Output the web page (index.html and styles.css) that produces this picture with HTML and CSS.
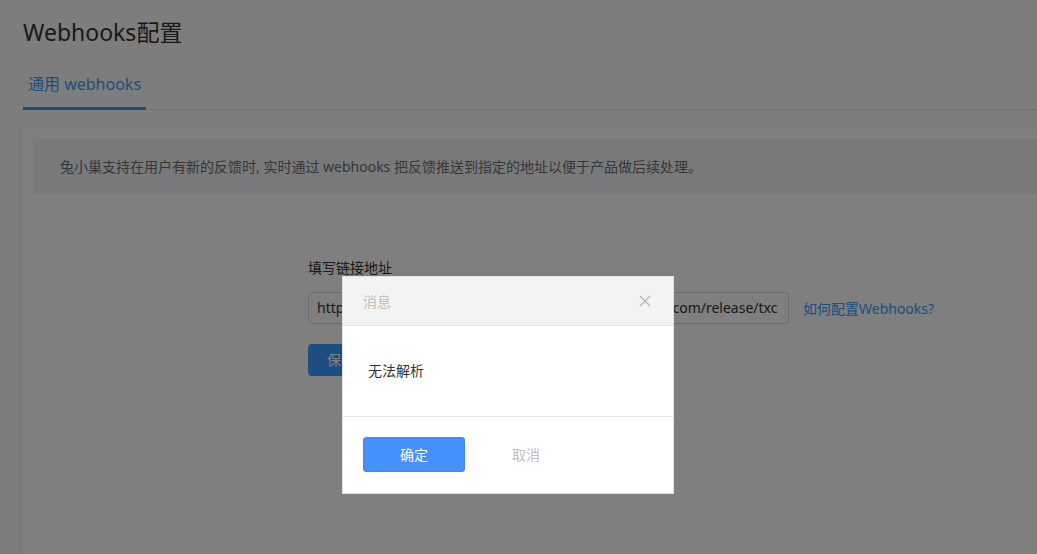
FILE: index.html
```html
<!DOCTYPE html>
<html lang="zh-CN">
<head>
<meta charset="utf-8">
<title>Webhooks配置</title>
<link rel="stylesheet" href="styles.css">
</head>
<body>
<div class="page">
  <h1 class="title">Webhooks配置</h1>
  <div class="tabs">
    <div class="tab tab-active">通用 webhooks</div>
  </div>
  <div class="card">
    <div class="notice">兔小巢支持在用户有新的反馈时, 实时通过 webhooks 把反馈推送到指定的地址以便于产品做后续处理。</div>
    <div class="form">
      <div class="label">填写链接地址</div>
      <div class="row">
        <div class="input">https://hooks.webhook-server.example-prods.tencent.com/release/txc</div>
        <a class="help">如何配置Webhooks?</a>
      </div>
      <div class="save">保存</div>
    </div>
  </div>
</div>
<div class="mask"></div>
<div class="dialog">
  <div class="dialog-head">
    <span class="dialog-title">消息</span>
    <svg class="close" width="12" height="12" viewBox="0 0 12 12"><path d="M1 1L11 11M11 1L1 11" stroke="#b4b4b4" stroke-width="1.2" fill="none"/></svg>
  </div>
  <div class="dialog-body">无法解析</div>
  <div class="dialog-foot">
    <div class="btn btn-ok">确定</div>
    <div class="btn btn-cancel">取消</div>
  </div>
</div>
</body>
</html>
```

FILE: styles.css
```css
html, body {
  margin: 0;
  padding: 0;
  height: 100%;
}
body {
  background: #fafafa;
  font-family: "Noto Sans", "Noto Sans CJK SC", sans-serif;
  color: #333;
  overflow: hidden;
}
.page {
  padding-left: 23px;
  height: 100%;
  display: flex;
  flex-direction: column;
}
.title {
  margin: 0;
  padding-top: 17px;
  font-size: 23px;
  line-height: 30px;
  font-weight: normal;
  color: #333;
}
.tabs {
  margin-top: 23px;
  display: flex;
  border-bottom: 1px solid #e6e6e6;
}
.tab {
  padding: 0 5px 9px;
  line-height: 28px;
  font-size: 16px;
  margin-bottom: -1px;
}
.tab-active {
  color: #3a9dff;
  border-bottom: 3px solid #3a9dff;
}
.card {
  margin-top: 19px;
  background: #fff;
  flex: 1;
  padding: 10px 0 0 10px;
}
.notice {
  background: #f1f3f6;
  height: 55px;
  line-height: 55px;
  padding-left: 27px;
  font-size: 14px;
  color: #6f6f6f;
}
.form {
  margin: 64px 0 0 275px;
}
.label {
  font-size: 14px;
  line-height: 20px;
  color: #333;
}
.row {
  margin-top: 14px;
  display: flex;
  align-items: center;
}
.input {
  box-sizing: border-box;
  width: 481px;
  height: 32px;
  line-height: 30px;
  border: 1px solid #d9d9d9;
  border-radius: 4px;
  padding-left: 8px;
  font-size: 14px;
  color: #333;
  white-space: nowrap;
  overflow: hidden;
}
.help {
  margin-left: 14px;
  font-size: 14px;
  color: #3a9dff;
}
.save {
  margin-top: 20px;
  display: inline-block;
  height: 32px;
  line-height: 32px;
  padding: 0 19px;
  background: #3a9dff;
  border-radius: 4px;
  color: #fff;
  font-size: 14px;
}
.mask {
  position: fixed;
  inset: 0;
  background: rgba(0, 0, 0, 0.5);
}
.dialog {
  position: fixed;
  left: 342px;
  top: 276px;
  width: 332px;
  box-sizing: border-box;
  background: #fff;
  border: 1px solid #e2e2e2;
}
.dialog-head {
  height: 48px;
  background: #f3f3f3;
  border-bottom: 1px solid #e3e3e3;
  display: flex;
  align-items: center;
  justify-content: space-between;
  padding: 0 22px 0 20px;
}
.dialog-title {
  font-size: 14px;
  color: #bdbdbd;
}
.dialog-body {
  height: 91px;
  border-bottom: 1px solid #e3e3e3;
  padding-left: 25px;
  font-size: 14px;
  line-height: 20px;
  padding-top: 35px;
  box-sizing: border-box;
  color: #333;
}
.dialog-foot {
  display: flex;
  padding: 20px 20px 21px;
  gap: 10px;
}
.btn {
  width: 102px;
  height: 35px;
  line-height: 35px;
  text-align: center;
  font-size: 14px;
  border-radius: 3px;
  box-sizing: border-box;
}
.btn-ok {
  background: #4590fb;
  border: 1px solid #3f88f0;
  color: #fff;
  line-height: 33px;
}
.btn-cancel {
  color: #bdbdbd;
}
```
